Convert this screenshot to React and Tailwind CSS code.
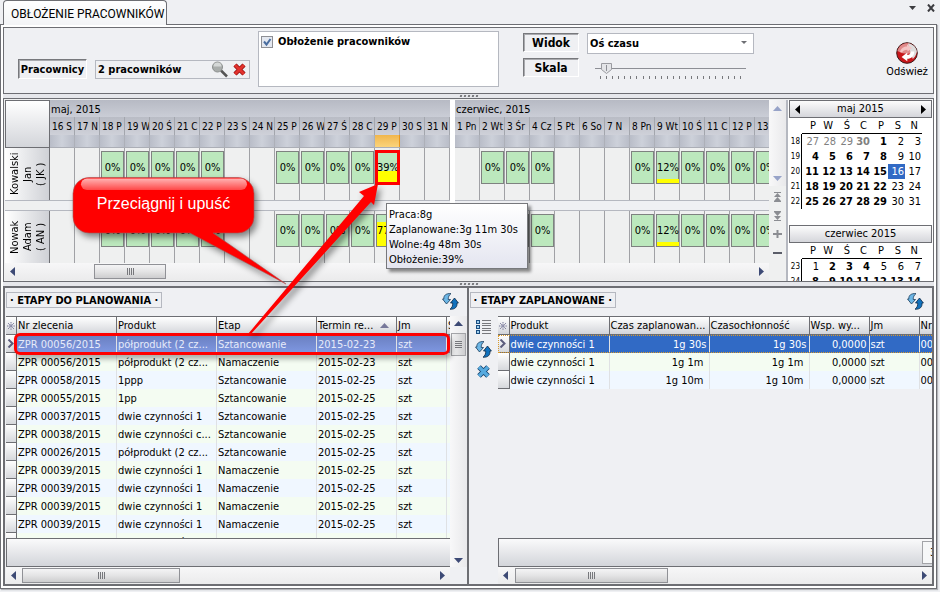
import React from "react";

const MAY = ["16 S", "17 N", "18 P", "19 W", "20 Ś", "21 C", "22 P", "23 S", "24 N", "25 P", "26 W", "27 Ś", "28 C", "29 P", "30 S", "31 N"];
const JUNE = ["1 Pn", "2 Wt", "3 Śr", "4 Cz", "5 Pt", "6 So", "7 N", "8 Pn", "9 Wt", "10 Ś", "11 C", "12 P", "13"];
const MAY_BASE = { 2: 0, 3: 0, 4: 0, 5: 0, 6: 0, 9: 0, 10: 0, 11: 0, 12: 0 };
const JUNE_LOAD = { 1: 0, 2: 0, 3: 0, 7: 0, 8: 12, 9: 0, 10: 0, 11: 0, 12: 0 };

const WORKERS = [
  { name: ["Kowalski", "Jan", "( JK )"], may: { ...MAY_BASE, 13: 39 } },
  { name: ["Nowak", "Adam", "( AN )"], may: { ...MAY_BASE, 13: 77 } },
];

const ORDERS = [
  ["ZPR 00056/2015", "półprodukt (2 cz...", "Sztancowanie", "2015-02-23"],
  ["ZPR 00056/2015", "półprodukt (2 cz...", "Namaczenie", "2015-02-23"],
  ["ZPR 00058/2015", "1ppp", "Sztancowanie", "2015-02-25"],
  ["ZPR 00055/2015", "1pp", "Sztancowanie", "2015-02-25"],
  ["ZPR 00037/2015", "dwie czynności 1", "Sztancowanie", "2015-02-25"],
  ["ZPR 00038/2015", "dwie czynności c...", "Sztancowanie", "2015-02-25"],
  ["ZPR 00026/2015", "półprodukt (2 cz...", "Sztancowanie", "2015-02-25"],
  ["ZPR 00039/2015", "dwie czynności 1", "Namaczenie", "2015-02-25"],
  ["ZPR 00039/2015", "dwie czynności 1", "Namaczenie", "2015-02-25"],
  ["ZPR 00039/2015", "dwie czynności 1", "Namaczenie", "2015-02-25"],
  ["ZPR 00039/2015", "dwie czynności 1", "Namaczenie", "2015-02-25"],
  ["ZPR 00039/2015", "dwie czynności 1", "Namaczenie", "2015-02-25"],
];

const PLANNED = [
  ["dwie czynności 1", "1g 30s", "1g 30s"],
  ["dwie czynności 1", "1g 1m", "1g 1m"],
  ["dwie czynności 1", "1g 10m", "1g 10m"],
];

const MAY_WEEKS = [
  [18, [27, 28, 29, 30, 1, 2, 3]],
  [19, [4, 5, 6, 7, 8, 9, 10]],
  [20, [11, 12, 13, 14, 15, 16, 17]],
  [21, [18, 19, 20, 21, 22, 23, 24]],
  [22, [25, 26, 27, 28, 29, 30, 31]],
];
const JUNE_WEEKS = [
  [23, [1, 2, 3, 4, 5, 6, 7]],
  [24, [8, 9, 10, 11, 12, 13, 14]],
];
const isBold = (month, week, day, i) => {
  if (month === "maj") return week === 18 ? day === 30 || day === 1 : i < 5;
  return week === 23 ? day > 1 && day < 5 : true;
};

const DAY_HEAD = "h-[18px] w-[25px] shrink-0 overflow-hidden border-r border-[#a3a6ad] pt-px pl-[2px] text-[10px] leading-[18px] whitespace-nowrap";
const BEVEL = "flex items-center justify-center border border-b-white border-r-white border-l-[#77787c] border-t-[#77787c] bg-[#eff0f3] pt-px font-bold leading-none shadow-[inset_1px_1px_0_#a9aaae]";
const HEADER = "border-y border-r border-[#6d6e73] bg-linear-to-b from-white to-[#d3d5da] p-0 pl-px text-left font-normal leading-[17px]";
const CELL = "h-[18px] overflow-hidden border-r border-[#dfe1e4] p-0 pt-px pl-px leading-[17px]";

function Triangle({ dir, className = "" }) {
  const d = { left: "M5 0v9L0 4.5z", right: "M0 0v9l5-4.500z", up: "M0 5h9L4.500 0z", down: "M0 0h9L4.500 5z" }[dir];
  const side = dir === "left" || dir === "right";
  return (
    <svg width={side ? 5 : 9} height={side ? 9 : 5} className={className} aria-hidden="true">
      <path d={d} fill="currentColor" />
    </svg>
  );
}

function RefreshIcon() {
  return (
    <svg width="17" height="17" viewBox="0 0 17 17" aria-hidden="true">
      <path d="M9 .6C4 .2 1.500 2.500 1.800 6H.5L4.500 11 8.500 6.500H6.200C6.200 4 7 2 9 .6z" fill="#6db7e6" stroke="#183a5a" strokeWidth=".8" />
      <path d="M8 16.200c5 .4 7.400-2.200 7-6.200h1.400L12.500 5 8.500 10h2.200c.2 2.600-.7 4.700-2.700 6.200z" fill="#1272bd" stroke="#0b2744" strokeWidth=".8" />
    </svg>
  );
}

function HScroll({ thumb }) {
  return (
    <div className="flex h-[17px] shrink-0 items-center bg-linear-to-b from-[#f7f7f8] to-[#ebebec] pr-[5px] pl-[5px] text-[#3d4a75]">
      <button type="button" aria-label="Przewiń w lewo"><Triangle dir="left" /></button>
      {thumb}
      <button type="button" aria-label="Przewiń w prawo" className="ml-auto"><Triangle dir="right" /></button>
    </div>
  );
}

function Thumb({ className }) {
  return (
    <div className={"flex h-[15px] items-center justify-center gap-px border border-[#909196] bg-linear-to-b from-[#f4f4f5] via-[#e4e4e5] to-[#cdcdcf] " + className}>
      {[0, 1, 2, 3].map((i) => <span key={i} className="h-[7px] w-px bg-[#77787c]" />)}
    </div>
  );
}

function Grip() {
  return (
    <div className="flex h-1 items-center justify-center gap-[2px]">
      {[0, 1, 2, 3, 4].map((i) => <span key={i} className="size-[2px] -skew-x-12 bg-[#77787c]" />)}
    </div>
  );
}

function LoadBox({ load }) {
  return (
    <div className="h-full w-[25px] shrink-0 border-r border-[#a0a1a5] pt-[3px] pl-px">
      {load !== undefined && (
        <div className="grid h-[33px] w-[23px] border border-[#7e8280] bg-[#bce8bd]">
          <div className="col-start-1 row-start-1 self-end bg-[#ffff00]" style={{ height: load + "%" }} />
          <span className="col-start-1 row-start-1 flex items-center justify-center self-stretch pt-px">{load}%</span>
        </div>
      )}
    </div>
  );
}

function Month({ title, days, loads, today, className }) {
  return (
    <div className={"flex flex-col overflow-hidden " + className}>
      <div className="h-[17px] shrink-0 bg-linear-to-b from-[#b7bac4] to-[#cacdd6] pt-px pl-px leading-[17px]">{title}</div>
      <div className="flex shrink-0 bg-linear-to-b from-[#b9bcc5] to-[#cfd1d9]">
        {days.map((d) => <div key={d} className={DAY_HEAD}>{d}</div>)}
      </div>
      <div className="flex h-[13px] shrink-0 border-b border-[#abaeb6] bg-[#c4c8d1]">
        {days.map((d, i) => (
          <div key={d} className={"w-[25px] shrink-0 border-r " + (i === today ? "border-[#e8951c] bg-linear-to-b from-[#f0b64c] to-[#fbd47a]" : "border-[#adb0b8] bg-linear-to-r from-[#b9bdc8] via-[#cdd1da] to-[#b9bdc8]")} />
        ))}
      </div>
      {loads.map((l, r) => (
        <React.Fragment key={r}>
          {r > 0 && <div className="h-[11px] shrink-0 border-y border-[#b5b8c0] bg-[#eff0f3]" />}
          <div className="flex h-[52px] shrink-0">
            {days.map((d, i) => <LoadBox key={d} load={l[i]} />)}
          </div>
        </React.Fragment>
      ))}
    </div>
  );
}

function Calendar({ month, weeks, nav }) {
  return (
    <div className="shrink-0">
      <div className="flex h-[18px] items-center justify-center border border-[#6d6e73] bg-linear-to-b from-[#fcfcfc] to-[#d5d6db] px-[5px]">
        {nav && <button type="button" aria-label="Poprzedni miesiąc"><Triangle dir="left" /></button>}
        <span className="flex-1 pt-px text-center">{month} 2015</span>
        {nav && <button type="button" aria-label="Następny miesiąc"><Triangle dir="right" /></button>}
      </div>
      <table className="table-fixed border-separate border-spacing-0">
        <colgroup><col className="w-[13px]" /><col className="w-[18px]" />{[1, 2, 3, 4, 5, 6].map((i) => <col key={i} className="w-[17px]" />)}</colgroup>
        <thead>
          <tr>
            <td className="h-[16px] p-0" />
            {["P", "W", "Ś", "C", "P", "S", "N"].map((d, i) => (
              <th key={i} className="h-[16px] border-b border-black p-0 pr-1 text-right font-normal leading-[15px]">{d}</th>
            ))}
          </tr>
        </thead>
        <tbody>
          {weeks.map(([w, days]) => (
            <tr key={w}>
              <td className="h-[15px] border-r border-black p-0 pr-px text-right text-[8px] leading-[15px]">{w}</td>
              {days.map((d, i) => {
                const gray = w === 18 && d > 20;
                const sel = w === 20 && d === 16;
                return (
                  <td key={i} className={"h-[15px] p-0 pr-px text-right leading-[15px] " + (gray ? "text-[#808080] " : sel ? "bg-[#316ac5] text-white " : "") + (isBold(month, w, d, i) ? "font-bold" : "")}>{d}</td>
                );
              })}
            </tr>
          ))}
        </tbody>
      </table>
    </div>
  );
}

function PanelTitle({ children }) {
  return (
    <div className="flex h-[28px] shrink-0 items-start justify-between pt-1 pr-2 pl-px">
      <h2 className="h-[16px] border border-[#b5b8c0] px-[3px] text-[11px] leading-[15px] font-bold whitespace-nowrap">· {children} ·</h2>
      <button type="button" aria-label="Odśwież listę" className="mt-px"><RefreshIcon /></button>
    </div>
  );
}

function Indicator({ active }) {
  return (
    <td className="h-[18px] border-r border-b border-[#6d6e73] bg-linear-to-b from-white to-[#d6d8dc] p-0">
      {active && <svg width="8" height="9" className="mx-auto" aria-label="Bieżący wiersz"><path d="M1.500 .5l4 4-4 4" fill="none" stroke="#5b5c7c" strokeWidth="2" /></svg>}
    </td>
  );
}

function Star() {
  return (
    <th className={HEADER + " w-[11px]"}>
      <svg width="8" height="8" aria-label="Wiersze"><path d="M4 0v8M0 4h8M1 1l6 6M7 1L1 7" stroke="#77789a" strokeWidth="1" strokeDasharray="1.200 .6" /></svg>
    </th>
  );
}

export default function App() {
  return (
    <div className="relative flex h-screen min-h-[480px] w-full flex-col overflow-hidden bg-[#eff0f3] pr-[3px] pb-[3px] font-['DejaVu_Sans_Condensed','DejaVu_Sans',sans-serif] text-[11px] text-black">
      <header className="flex h-6 shrink-0 items-start justify-between pl-[3px]">
        <div className="z-10 h-[25px] rounded-t-sm border border-b-0 border-[#6d6e73] bg-linear-to-b from-white to-[#f3f4f6] pr-[2px] pl-[7px] font-['Roboto',sans-serif] text-[12px] leading-[26px] whitespace-nowrap">OBŁOŻENIE PRACOWNIKÓW</div>
        <div className="flex items-center gap-[11px] pt-[4px] pr-[2px] text-[#3c3c40]">
          <button type="button" aria-label="Lista okien"><svg width="7" height="4"><path d="M0 0h7L3.500 4z" fill="currentColor" /></svg></button>
          <button type="button" aria-label="Zamknij"><svg width="8" height="8"><path d="M1 0.500l6 7M7 .5l-6 7" stroke="currentColor" strokeWidth="2" /></svg></button>
        </div>
      </header>

      <main className="flex min-h-0 flex-1 flex-col border border-[#6d6e73] bg-white p-[2px] shadow-[1px_1px_1px_#b4b5b9]">
        <section className="flex h-[67px] shrink-0 items-start border border-[#6d6e73] bg-[#eff0f3] pl-[14px]">
          <div className="flex items-end gap-2 pt-[31px]">
            <button type="button" className={BEVEL + " h-[20px] w-[69px]"}>Pracownicy</button>
            <div className="flex h-[19px] w-[155px] items-center border border-[#b5b8c0] pr-[3px] pl-[2px]">
              <input aria-label="Wybrani pracownicy" readOnly defaultValue="2 pracowników" className="w-0 flex-1 bg-transparent pt-px font-bold outline-none" />
              <button type="button" aria-label="Szukaj">
                <svg width="16" height="17"><path d="M9 9.500l6 6" stroke="#555" strokeWidth="2.500" /><circle cx="5.500" cy="6" r="5" fill="#a9adab" stroke="#8b8e8d" /><path d="M1.500 5.500a4 4 0 0 1 8 0z" fill="#d5d8d7" /></svg>
              </button>
              <button type="button" aria-label="Wyczyść" className="ml-[5px]">
                <svg width="13" height="13"><path d="M2 2l9 9M11 2l-9 9" stroke="#8f0f0f" strokeWidth="4.500" /><path d="M2 2l9 9M11 2l-9 9" stroke="#e2322d" strokeWidth="3" /></svg>
              </button>
            </div>
          </div>
          <div className="mt-[3px] ml-2 h-[56px] w-[241px] border border-[#b5b8c0] bg-white pt-[3px] pl-[2px]">
            <label className="flex items-center gap-[5px] font-bold leading-[14px]">
              <span className="grid">
                <input type="checkbox" defaultChecked className="peer col-start-1 row-start-1 size-[12px] appearance-none border border-[#8e8f94] bg-[#e4e8f0]" />
                <svg width="12" height="12" className="pointer-events-none col-start-1 row-start-1 hidden peer-checked:block"><path d="M3 5.500L5.500 8.500 9.500 3" fill="none" stroke="#4a6ea0" strokeWidth="2" /></svg>
              </span>
              Obłożenie pracowników
            </label>
          </div>
          <div className="mt-[5px] ml-6 grid grid-cols-[56px_167px] gap-x-2 gap-y-[6px]">
            <button type="button" className={BEVEL + " h-[19px] text-[12px]"}>Widok</button>
            <div className="grid h-[19px]">
              <select aria-label="Widok" className="col-start-1 row-start-1 appearance-none rounded-none border border-[#b5b8c0] bg-white pt-[2px] pl-[2px] font-bold outline-none"><option>Oś czasu</option></select>
              <svg width="7" height="4" className="pointer-events-none col-start-1 row-start-1 mr-[6px] self-center justify-self-end"><path d="M0 0h6L3 3z" fill="#6d6e73" /></svg>
            </div>
            <button type="button" className={BEVEL + " h-[19px] text-[12px]"}>Skala</button>
            <div className="mr-[8px] ml-[8px] flex flex-col pt-[5px]">
              <div className="grid h-[11px]">
                <div className="col-start-1 row-start-1 h-px self-center bg-[#8d8f95]" />
                <svg width="11" height="11" className="col-start-1 row-start-1 ml-[6px]"><path d="M.5 .5h10v6l-5 4-5-4z" fill="#e4e5e8" stroke="#9a9ba0" /><path d="M5.500 2v6" stroke="#8d8f95" /></svg>
                <input type="range" aria-label="Skala" min="0" max="23" defaultValue="0" className="col-start-1 row-start-1 m-0 h-[11px] w-full opacity-0" />
              </div>
              <div className="mt-[2px] mr-[5px] ml-[5px] flex justify-between">
                {Array.from({ length: 24 }, (_, i) => <span key={i} className="h-[3px] w-px bg-[#77787c]" />)}
              </div>
            </div>
          </div>
          <button type="button" className="mt-[14px] mr-[5px] ml-auto flex flex-col items-center font-['Roboto',sans-serif] text-[11px] leading-[16px]">
            <svg width="22" height="22" viewBox="0 0 22 22" aria-hidden="true">
              <circle cx="11" cy="11" r="10.300" fill="#c8161a" stroke="#3c1a1a" strokeWidth="1" />
              <path d="M1.500 9C3 3 8 1 12 1.300s8 4 8.500 8.700c-5 2-12 3-19-1z" fill="#e08a8a" />
              <path d="M12 1.500c5 .5 8.500 4 8.800 8.500-1 4-3 6-4 7l-3-9z" fill="#dcdcdc" />
              <path d="M4 10c1-4 4-5.500 7-5.500V2.500l5 3.500-4.500 3.500V7.700C8.500 7.700 7 8.500 6 10.500z" fill="#f4c4c4" />
              <path d="M18.300 9.500c0 4.500-3 7.300-7 7.300v2.400L5.600 15l5.700-4.400v2.500c2 0 3.200-1.200 3.500-3.600z" fill="#fff" />
            </svg>
            <span>Odśwież</span>
          </button>
        </section>

        <div className="h-[4px] shrink-0 bg-[#e6e7eb]"><Grip /></div>

        <section className="flex h-[184px] shrink-0 border border-[#6d6e73] bg-[#eff0f0] pt-px pl-px">
          <div className="flex min-w-0 flex-1 flex-col">
            <div className="flex h-[163px] overflow-hidden">
              <div className="flex w-[45px] shrink-0 flex-col">
                <div className="h-[48px] border border-[#6d6e73] bg-linear-to-b from-white to-[#d3d5da]" />
                {WORKERS.map((w, i) => (
                  <React.Fragment key={i}>
                    {i > 0 && <div className="h-[11px] shrink-0 border-y border-[#b5b8c0]" />}
                    <div className="flex h-[52px] shrink-0 rotate-180 items-center justify-center border-l border-[#6d6e73] bg-linear-to-l from-white to-[#cfd1d6] text-center leading-[13px] [writing-mode:vertical-rl]">
                      <div>{w.name.map((n) => <div key={n}>{n}</div>)}</div>
                    </div>
                  </React.Fragment>
                ))}
              </div>
              <Month title="maj, 2015" days={MAY} loads={WORKERS.map((w) => w.may)} today={13} className="w-[400px] shrink-0" />
              <div className="w-[5px] shrink-0 bg-white" />
              <Month title="czerwiec, 2015" days={JUNE} loads={[JUNE_LOAD, JUNE_LOAD]} className="min-w-0 flex-1" />
            </div>
            <HScroll thumb={<Thumb className="ml-[79px] w-[72px]" />} />
          </div>
          <div className="flex w-[17px] shrink-0 flex-col items-center text-[#8b8d92]">
            <div className="flex h-[86px] w-full flex-col items-center justify-between bg-linear-to-r from-[#f8f8f9] to-[#e9e9eb] pt-[6px] pb-[5px] text-[#97a3c8]">
              <Triangle dir="up" /><Triangle dir="down" />
            </div>
            <svg width="9" height="64" className="mt-[6px]" aria-hidden="true">
              <g fill="currentColor">
                <path d="M1 0h7v1H1zM4.500 1L8 5H1zM4.500 5L8 9H1zM1 9h7v1H1z" />
                <path d="M1 19h7v1H1zM1 20h7l-3.500 4zM1 24h7l-3.500 4zM1 28h7v1H1z" />
                <path d="M0 41h9v2H0zM3.500 38h2v8h-2z" />
                <path d="M0 60h9v2H0z" fill="#5a5d68" />
              </g>
            </svg>
          </div>
          <aside className="flex w-[147px] shrink-0 flex-col gap-4 overflow-hidden border-l-2 border-[#b5b8c0] bg-white pr-px pl-px">
            <Calendar month="maj" weeks={MAY_WEEKS} nav />
            <Calendar month="czerwiec" weeks={JUNE_WEEKS} />
          </aside>
        </section>

        <div className="h-[4px] shrink-0 bg-[#e6e7eb]"><Grip /></div>

        <section className="grid min-h-0 flex-1 grid-cols-2 border-2 border-[#6d6e73] bg-[#eff0f3]">
          <div className="flex min-h-0 min-w-0 flex-col border-r-2 border-[#6d6e73]">
            <PanelTitle>ETAPY DO PLANOWANIA</PanelTitle>
            <div className="flex min-h-0 flex-1">
              <div className="flex min-w-0 flex-1 flex-col pl-px">
                <div className="min-h-0 flex-1 overflow-hidden">
                  <table className="w-[521px] table-fixed border-separate border-spacing-0 whitespace-nowrap">
                    <colgroup><col className="w-[11px]" /><col className="w-[100px]" /><col className="w-[100px]" /><col className="w-[100px]" /><col className="w-[80px]" /><col className="w-[50px]" /><col className="w-[80px]" /></colgroup>
                    <thead>
                      <tr className="h-[19px]">
                        <Star />
                        <th className={HEADER}>Nr zlecenia</th><th className={HEADER}>Produkt</th><th className={HEADER}>Etap</th>
                        <th className={HEADER}><span className="flex items-center justify-between pr-[7px]">Termin re...<Triangle dir="up" className="text-[#77789a]" /></span></th>
                        <th className={HEADER}>Jm</th><th className={HEADER}>Stan</th>
                      </tr>
                    </thead>
                    <tbody>
                      {ORDERS.map((o, i) => (
                        <tr key={i} className={i === 0 ? "bg-linear-to-b from-[#6a7fc0] to-[#7f98e2] text-[#e6ebfa]" : i % 2 ? "bg-[#f4fcf2]" : "bg-[#f0f7ff]"}>
                          <Indicator active={i === 0} />
                          {o.map((c, k) => <td key={k} className={CELL}>{c}</td>)}
                          <td className={CELL}>szt</td><td className={CELL} />
                        </tr>
                      ))}
                    </tbody>
                  </table>
                </div>
                <div className="h-[29px] shrink-0 border-y border-l border-[#6d6e73] bg-linear-to-b from-[#fafafb] to-[#d3d5da]" />
                <HScroll thumb={<Thumb className="ml-[6px] w-[158px]" />} />
              </div>
              <div className="mb-[17px] flex w-[17px] flex-col items-center bg-linear-to-r from-[#f8f8f9] to-[#e9e9eb] pt-[5px] pb-1 text-[#3d4a75]">
                <Triangle dir="up" />
                <div className="mt-[7px] flex h-[23px] w-[15px] flex-col items-center justify-center gap-px border border-[#a3a4a8] bg-linear-to-r from-[#f4f4f5] to-[#cdcdcf]">
                  {[0, 1, 2, 3].map((i) => <span key={i} className="h-px w-[7px] bg-[#77787c]" />)}
                </div>
                <Triangle dir="down" className="mt-auto" />
              </div>
            </div>
          </div>

          <div className="flex min-h-0 min-w-0 flex-col">
            <PanelTitle>ETAPY ZAPLANOWANE</PanelTitle>
            <div className="flex min-h-0 flex-1">
              <div className="flex w-[29px] shrink-0 flex-col items-center gap-[7px] pt-[4px]">
                <button type="button" aria-label="Lista">
                  <svg width="15" height="14">
                    <path d="M0 0h4v4H0zM0 5h4v4H0zM0 10h4v4H0z" fill="#1a4d80" /><path d="M1 1h2v2H1zM1 6h2v2H1zM1 11h2v2H1z" fill="#9fd0f0" />
                    <path d="M6 .5h9M6 3.500h9M6 5.500h9M6 8.500h9M6 10.500h9M6 13.500h9" stroke="#77787c" />
                  </svg>
                </button>
                <button type="button" aria-label="Odśwież"><RefreshIcon /></button>
                <button type="button" aria-label="Usuń">
                  <svg width="13" height="13"><path d="M2 2l9 9M11 2l-9 9" stroke="#15436e" strokeWidth="5" /><path d="M2 2l9 9M11 2l-9 9" stroke="#56aadf" strokeWidth="3.400" /></svg>
                </button>
              </div>
              <div className="flex min-w-0 flex-1 flex-col">
                <div className="min-h-0 flex-1 overflow-hidden">
                  <table className="w-[502px] table-fixed border-separate border-spacing-0 whitespace-nowrap">
                    <colgroup><col className="w-[12px]" /><col className="w-[100px]" /><col className="w-[100px]" /><col className="w-[100px]" /><col className="w-[60px]" /><col className="w-[50px]" /><col className="w-[80px]" /></colgroup>
                    <thead>
                      <tr className="h-[19px]">
                        <Star />
                        <th className={HEADER}>Produkt</th><th className={HEADER}>Czas zaplanowan...</th><th className={HEADER}>Czasochłonność</th><th className={HEADER}>Wsp. wy...</th><th className={HEADER}>Jm</th><th className={HEADER}>Nr zlecenia</th>
                      </tr>
                    </thead>
                    <tbody>
                      {PLANNED.map((p, i) => (
                        <tr key={i} className={i === 0 ? "bg-[#316ac5] text-white outline-1 -outline-offset-1 outline-dotted outline-[#d99a2b]" : i % 2 ? "bg-[#f4fcf2]" : "bg-[#f0f7ff]"}>
                          <Indicator active={i === 0} />
                          <td className={CELL}>{p[0]}</td>
                          <td className={CELL + " text-right " + (i === 0 ? "pr-[2px]" : "pr-[5px]")}>{p[1]}</td>
                          <td className={CELL + " text-right " + (i === 0 ? "pr-[2px]" : "pr-[5px]")}>{p[2]}</td>
                          <td className={CELL + " pr-[2px] text-right"}>0,0000</td>
                          <td className={CELL}>szt</td>
                          <td className={CELL}>00001</td>
                        </tr>
                      ))}
                    </tbody>
                  </table>
                </div>
                <div className="flex h-[29px] shrink-0 justify-end overflow-hidden border-y border-l border-[#6d6e73] bg-linear-to-b from-[#fafafb] to-[#d3d5da] pt-[2px]">
                  <div className="h-[23px] w-[10px] shrink-0 overflow-hidden border border-r-0 border-[#a3a4a8] bg-[#f6f7f8] pl-[7px] leading-[22px]">3</div>
                </div>
                <HScroll thumb={<Thumb className="ml-[7px] w-[153px]" />} />
              </div>
            </div>
          </div>
        </section>
      </main>

      <div className="absolute top-[150px] left-[375px] h-[35px] w-[25px] border-[3px] border-[#ff0000]" />
      <div className="absolute top-[333px] left-[14px] h-[22px] w-[436px] rounded-md border-[3px] border-[#ff0000] shadow-[2px_4px_5px_rgba(0,0,0,0.3)]" />
      <svg width="420" height="350" className="pointer-events-none absolute top-0 left-0 drop-shadow-[3px_4px_3px_rgba(0,0,0,0.45)]" aria-hidden="true">
        <path d="M248 334L364 196 359 192 378 184 374 205 371 202 251 334z" fill="#ff0000" />
      </svg>
      <svg width="300" height="300" className="pointer-events-none absolute top-0 left-0 drop-shadow-[3px_4px_3px_rgba(0,0,0,0.45)]" aria-hidden="true">
        <defs>
          <linearGradient id="gloss" x1="0" y1="0" x2="0" y2="1"><stop offset="0" stopColor="#ffb4b4" /><stop offset="1" stopColor="#ff4848" /></linearGradient>
        </defs>
        <path d="M89 177.500H238a16 16 0 0 1 16 16V217a16 16 0 0 1-16 16H213L286 284 190 233H89a16 16 0 0 1-16-16V193.500a16 16 0 0 1 16-16z" fill="#ff0000" stroke="#a55" strokeWidth=".6" />
        <rect x="81" y="178.500" width="166" height="11.500" rx="6" fill="url(#gloss)" />
      </svg>
      <div className="absolute top-[194px] left-[73px] w-[181px] text-center font-['Liberation_Sans',sans-serif] text-[16px] leading-[20px] text-white">Przeciągnij i upuść</div>
      <div role="tooltip" className="absolute top-[203px] left-[386px] h-[66px] w-[142px] border border-[#77787c] bg-linear-to-b from-white to-[#e4e5f0] pt-[3px] pl-[2px] leading-[15px] whitespace-nowrap shadow-[3px_3px_3px_rgba(0,0,0,0.45)]">
        <p>Praca:8g</p><p>Zaplanowane:3g 11m 30s</p><p>Wolne:4g 48m 30s</p><p>Obłożenie:39%</p>
      </div>
    </div>
  );
}
